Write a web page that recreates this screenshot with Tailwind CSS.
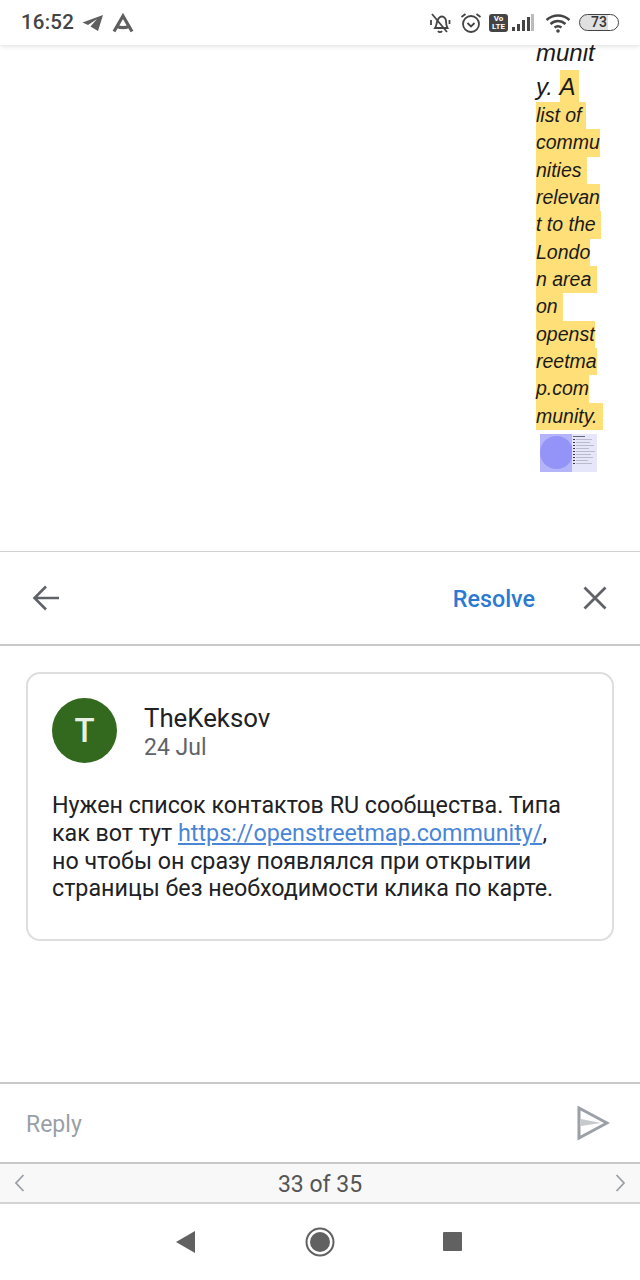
<!DOCTYPE html>
<html lang="en">
<head>
    <meta charset="UTF-8">
    <meta name="viewport" content="width=device-width, initial-scale=1.0">
    <title>Comment thread</title>
    <script src="https://cdn.jsdelivr.net/npm/@tailwindcss/browser@4"></script>
</head>
<body class="bg-white">
    <div class="w-[640px] h-[1280px] flex flex-col overflow-hidden font-['Roboto',sans-serif]">

        <!-- Status bar -->
        <div class="h-[45px] shrink-0 bg-white relative z-10 shadow-[0_1px_5px_rgba(0,0,0,0.14)] flex items-center pl-[21px] pr-[21px] text-[#444]">
            <span class="text-[20.500px] font-medium tracking-[0.2px] w-[61px]">16:52</span>
            <svg class="w-[22px] h-[18px]" viewBox="0 0 22 18"><path fill="#5f5f5f" d="M21 1 0.5 8.5 6 11l9-6-6.500 7.500L16 17z"/></svg>
            <svg class="w-[22px] h-[20px] ml-[8px]" viewBox="0 0 22 20"><path fill="none" stroke="#5f5f5f" stroke-width="3.200" d="M2 18.500 11 3l9 15.500M5 13.500c4 1.500 8 1.500 12 0"/></svg>
            <div class="ml-auto flex items-center">
                <svg class="w-[22px] h-[22px]" viewBox="0 0 22 22"><g fill="none" stroke="#444" stroke-width="1.800"><path d="M6 16c1.500-2 1.500-5 2.500-7.500S11 4.500 13 4.500s4 2 4 4.500.5 5 1.500 7z"/><path d="M3 2l15 18"/><path d="M9 19c1 1.500 3 1.500 4 0"/><path d="M2 8v5M20.500 8v4"/></g></svg>
                <svg class="w-[22px] h-[22px] ml-[9px]" viewBox="0 0 22 22"><g fill="none" stroke="#444" stroke-width="1.800"><circle cx="11" cy="12" r="8"/><path d="M7.500 11l3.500 3.500 3.500-3.500"/><path d="M1.500 5 5.500 2M20.500 5l-4-3"/></g></svg>
                <div class="w-[19px] h-[18px] ml-[7px] bg-[#444] rounded-[3px] flex flex-col items-center justify-center text-white text-[8px] leading-[8px] font-bold"><span>Vo</span><span>LTE</span></div>
                <svg class="w-[24px] h-[18px] ml-[2px]" viewBox="0 0 24 18"><rect x="2" y="13" width="3" height="4" fill="#444"/><rect x="7" y="10" width="3" height="7" fill="#444"/><rect x="12" y="6" width="3" height="11" fill="#444"/><rect x="17" y="3" width="3" height="14" fill="#444"/><rect x="21" y="0" width="3" height="17" fill="#bbb"/></svg>
                <svg class="w-[26px] h-[20px] ml-[11px]" viewBox="0 0 26 20"><g fill="none" stroke="#444" stroke-width="2.400"><path d="M1.500 7c7-6 16-6 23 0"/><path d="M5.500 11c4.500-4 10.500-4 15 0"/><path d="M9.500 14.500c2-1.500 5-1.500 7 0"/></g><circle cx="13" cy="18" r="1.800" fill="#444"/></svg>
                <div class="w-[40px] h-[17px] ml-[8px] border-[1.500px] border-[#444] rounded-full overflow-hidden flex items-center justify-center text-[14px] font-medium text-[#333] bg-[linear-gradient(90deg,#e0e0e0_73%,#fff_73%)]">73</div>
            </div>
        </div>

        <!-- Document -->
        <div class="h-[506px] shrink-0 overflow-hidden pl-[536px] italic font-['Liberation_Sans',sans-serif] text-[19.500px] text-[#1a1a1a]">
            <div class="h-[25px] leading-[16px] text-[24px]">munit</div>
            <div class="h-[32px] leading-[34px] text-[24px] flex"><span>y.&nbsp;</span><span class="bg-[#ffdf78] h-[32px] pr-[3px]">A</span></div>
            <div class="h-[27.330px] leading-[27.330px] w-[50px] bg-[#ffdf78]">list of</div>
            <div class="h-[27.330px] leading-[27.330px] w-[64px] bg-[#ffdf78]">commu</div>
            <div class="h-[27.330px] leading-[27.330px] w-[51px] bg-[#ffdf78]">nities</div>
            <div class="h-[27.330px] leading-[27.330px] w-[64px] bg-[#ffdf78]">relevan</div>
            <div class="h-[27.330px] leading-[27.330px] w-[65px] bg-[#ffdf78]">t to the</div>
            <div class="h-[27.330px] leading-[27.330px] w-[54px] bg-[#ffdf78]">Londo</div>
            <div class="h-[27.330px] leading-[27.330px] w-[61px] bg-[#ffdf78]">n area</div>
            <div class="h-[27.330px] leading-[27.330px] w-[27px] bg-[#ffdf78]">on</div>
            <div class="h-[27.330px] leading-[27.330px] w-[59px] bg-[#ffdf78]">openst</div>
            <div class="h-[27.330px] leading-[27.330px] w-[61px] bg-[#ffdf78]">reetma</div>
            <div class="h-[27.330px] leading-[27.330px] w-[53px] bg-[#ffdf78]">p.com</div>
            <div class="h-[27.330px] leading-[27.330px] w-[67px] bg-[#ffdf78]">munity.</div>

            <!-- Thumbnail -->
            <div class="w-[57px] h-[38px] mt-[4px] ml-[4px] bg-[#b4b4fa] flex overflow-hidden blur-[0.4px]">
                <div class="w-[32px] shrink-0 flex items-center justify-center"><div class="w-[33px] h-[33px] shrink-0 rounded-full bg-[#9494f8]"></div></div>
                <div class="flex-1 bg-[#e6e6fb] flex flex-col gap-[1.500px] pt-[2px] pl-[1px]">
                    <div class="h-[1.500px] w-[12px] bg-[#667]"></div>
                    <div class="flex gap-[1px]"><div class="h-[1.500px] w-[2px] bg-[#334]"></div><div class="h-[1.500px] w-[16px] bg-[#bbc]"></div></div>
                    <div class="flex gap-[1px]"><div class="h-[1.500px] w-[2px] bg-[#334]"></div><div class="h-[1.500px] w-[14px] bg-[#bbc]"></div></div>
                    <div class="flex gap-[1px]"><div class="h-[1.500px] w-[2px] bg-[#334]"></div><div class="h-[1.500px] w-[18px] bg-[#bbc]"></div></div>
                    <div class="flex gap-[1px]"><div class="h-[1.500px] w-[2px] bg-[#334]"></div><div class="h-[1.500px] w-[13px] bg-[#bbc]"></div></div>
                    <div class="flex gap-[1px]"><div class="h-[1.500px] w-[2px] bg-[#334]"></div><div class="h-[1.500px] w-[19px] bg-[#bbc]"></div></div>
                    <div class="flex gap-[1px]"><div class="h-[1.500px] w-[2px] bg-[#334]"></div><div class="h-[1.500px] w-[15px] bg-[#bbc]"></div></div>
                    <div class="flex gap-[1px]"><div class="h-[1.500px] w-[2px] bg-[#334]"></div><div class="h-[1.500px] w-[17px] bg-[#bbc]"></div></div>
                    <div class="flex gap-[1px]"><div class="h-[1.500px] w-[2px] bg-[#334]"></div><div class="h-[1.500px] w-[12px] bg-[#bbc]"></div></div>
                    <div class="flex gap-[1px]"><div class="h-[1.500px] w-[2px] bg-[#334]"></div><div class="h-[1.500px] w-[16px] bg-[#bbc]"></div></div>
                </div>
            </div>
        </div>

        <!-- Thread header -->
        <div class="h-[95px] shrink-0 border-t border-b-2 border-t-[#d0d0d0] border-b-[#c8c8c8] flex items-center pl-[32px] pr-[33px]">
            <svg class="w-[28px] h-[28px]" viewBox="0 0 28 28"><path fill="none" stroke="#5f6368" stroke-width="2.600" d="M27 14H3M14 2.500 2.500 14 14 25.500"/></svg>
            <span class="ml-auto pt-[3px] text-[23.300px] font-medium text-[#2a7ad4]">Resolve</span>
            <svg class="w-[24px] h-[24px] ml-[48px]" viewBox="0 0 24 24"><path fill="none" stroke="#5f6368" stroke-width="2.800" d="M1.500 1.500l21 21M22.500 1.500l-21 21"/></svg>
        </div>

        <!-- Comment -->
        <div class="h-[436px] shrink-0 px-[26px] pt-[26px]">
            <div class="h-[269px] border-2 border-[#dedede] rounded-[14px] pt-[24px] pl-[24px] pr-[40px]">
                <div class="flex items-center">
                    <div class="w-[65px] h-[65px] rounded-full bg-[#33691e] flex items-center justify-center text-[#e8efe3] text-[33px] font-medium">T</div>
                    <div class="ml-[27px] pt-[3px]">
                        <div class="text-[25.800px] leading-[30px] text-[#202124]">TheKeksov</div>
                        <div class="text-[23px] leading-[29px] text-[#5f6368]">24 Jul</div>
                    </div>
                </div>
                <p class="mt-[29px] text-[23.250px] leading-[27.800px] text-[#202124]">Нужен список контактов RU сообщества. Типа как вот тут <span class="text-[#4a86d8] underline">https://openstreetmap.community/</span>, но чтобы он сразу появлялся при открытии страницы без необходимости клика по карте.</p>
            </div>
        </div>

        <!-- Reply -->
        <div class="h-[80px] shrink-0 border-t-2 border-[#c8c8c8] flex items-center pl-[26px] pr-[30px]">
            <span class="pt-[4px] text-[23px] text-[#9aa0a6]">Reply</span>
            <svg class="w-[33px] h-[36px] ml-auto" viewBox="0 0 33 36"><path fill="none" stroke="#9aa0a6" stroke-width="3" stroke-linejoin="miter" d="M2 3 30 18 2 33z"/><path fill="#c6cacd" d="M4 14 24 18 4 21z"/></svg>
        </div>

        <!-- Pager -->
        <div class="h-[42px] shrink-0 border-t-2 border-b-2 border-t-[#c8c8c8] border-b-[#d4d4d4] bg-[#f8f8f8] flex items-center justify-between pl-[14px] pr-[14px]">
            <svg class="w-[11px] h-[18px]" viewBox="0 0 11 18"><path fill="none" stroke="#9aa0a6" stroke-width="1.800" d="M9.500 1 2 9l7.500 8"/></svg>
            <span class="pt-[4px] text-[23px] text-[#555]">33 of 35</span>
            <svg class="w-[11px] h-[18px]" viewBox="0 0 11 18"><path fill="none" stroke="#9aa0a6" stroke-width="1.800" d="M1.500 1 9 9l-7.500 8"/></svg>
        </div>

        <!-- Android nav -->
        <div class="flex-1 flex items-center justify-center pb-[1px] pr-[2px]">
            <svg class="w-[19px] h-[22px]" viewBox="0 0 19 22"><path fill="#616161" d="M19 0v22L0 11z"/></svg>
            <svg class="w-[30px] h-[30px] ml-[110px]" viewBox="0 0 30 30"><circle cx="15" cy="15" r="13.500" fill="none" stroke="#616161" stroke-width="2"/><circle cx="15" cy="15" r="10" fill="#616161"/></svg>
            <div class="w-[19px] h-[19px] ml-[108px] bg-[#616161] rounded-[1px]"></div>
        </div>
    </div>
</body>
</html>
